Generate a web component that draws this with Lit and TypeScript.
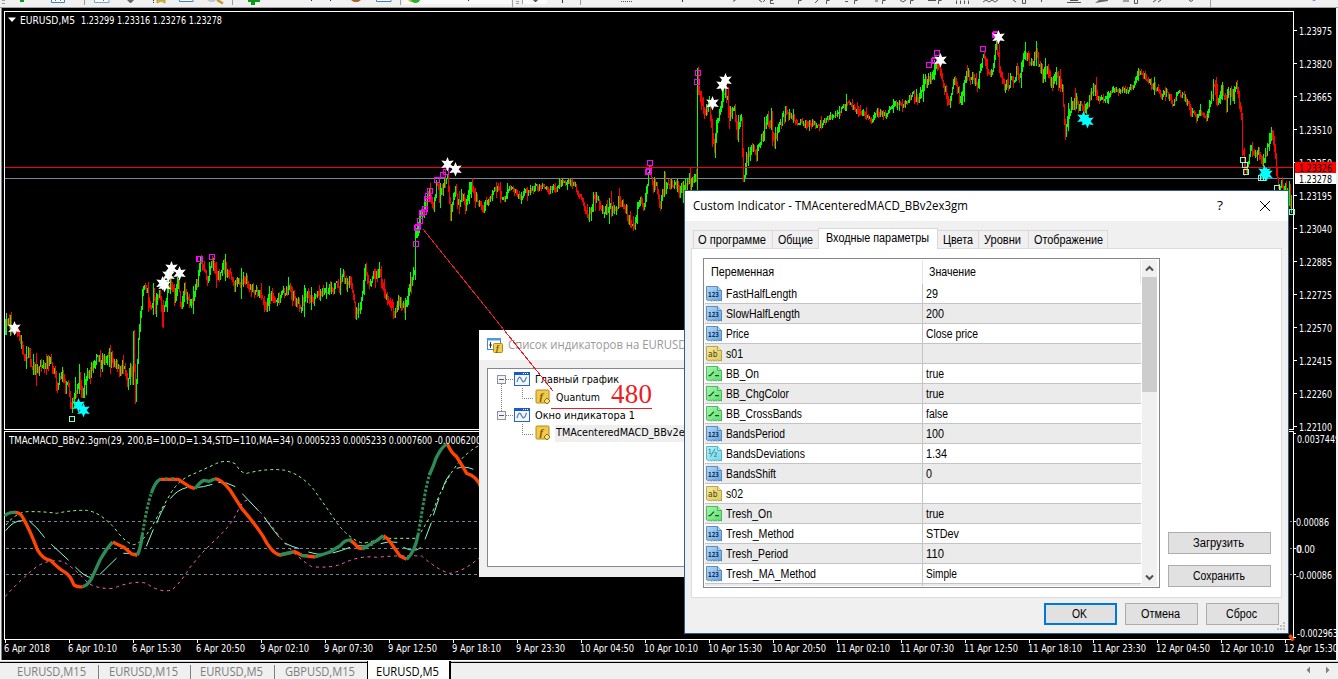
import {LitElement, html, svg, css} from 'lit';
import {customElement, property} from 'lit/decorators.js';

// size, width: the width every caption takes in pixels
const label = (text: string, width: number, size = 12) => html`
    <svg class="label" width=${width + 2} height="15">
        <text x="0" y="11" font-size=${size} textLength=${width} lengthAdjust="spacingAndGlyphs">${text}</text>
    </svg>`;

const chartText = (x: number, y: number, text: string, width: number) => svg`
    <text x=${x} y=${y} textLength=${width} lengthAdjust="spacingAndGlyphs">${text}</text>`;

const PRICES: [number, number][] = [
    [5, 329], [9, 323], [14, 328], [20, 335], [25, 359], [29, 352], [32, 364], [38, 373], [41, 363], [45, 368],
    [50, 362], [55, 368], [57, 388], [63, 370], [66, 386], [69, 386], [72, 411], [75, 397], [80, 379], [83, 397],
    [87, 375], [92, 370], [98, 354], [102, 365], [108, 354], [111, 357], [116, 365], [120, 371], [125, 365],
    [128, 385], [131, 365], [133, 384], [134, 335], [136, 400], [139, 340], [142, 307], [144, 285], [147, 290],
    [152, 310], [154, 292], [156, 308], [160, 292], [163, 320], [168, 290], [172, 284], [175, 297], [179, 286],
    [182, 307], [185, 290], [189, 302], [193, 300], [198, 280], [201, 263], [205, 271], [209, 282], [212, 260],
    [216, 271], [219, 275], [224, 267], [230, 275], [236, 284], [240, 283], [245, 276], [250, 289], [258, 292],
    [266, 308], [272, 297], [276, 303], [283, 292], [290, 290], [295, 298], [301, 308], [306, 294], [312, 301],
    [320, 294], [330, 289], [340, 285], [343, 272], [347, 285], [350, 280], [354, 295], [356, 314], [362, 303],
    [366, 270], [370, 285], [374, 275], [380, 273], [384, 290], [390, 300], [395, 313], [400, 300], [406, 307],
    [410, 285], [415, 268], [416, 236], [418, 226], [422, 216], [427, 203], [430, 191], [434, 207], [438, 182],
    [440, 201], [444, 182], [448, 176], [451, 217], [456, 185], [458, 208], [462, 195], [466, 206], [471, 183],
    [475, 192], [478, 200], [483, 206], [490, 201], [495, 190], [498, 187], [504, 200], [510, 187], [515, 191],
    [520, 199], [525, 193], [530, 190], [540, 187], [549, 190], [557, 188], [562, 181], [570, 183], [576, 187],
    [582, 200], [589, 218], [595, 195], [603, 211], [610, 206], [615, 211], [620, 201], [627, 212], [633, 228],
    [636, 225], [640, 200], [644, 205], [647, 193], [650, 167], [654, 188], [656, 183], [661, 206], [665, 187],
    [673, 181], [680, 190], [687, 184], [693, 180], [697, 177], [698, 82], [702, 100], [706, 113], [710, 103],
    [712, 128], [715, 145], [718, 124], [722, 104], [726, 90], [730, 115], [735, 110], [738, 137], [742, 114],
    [744, 182], [747, 160], [752, 148], [757, 155], [762, 140], [765, 128], [768, 118], [772, 125], [775, 141],
    [780, 128], [787, 111], [797, 122], [812, 124], [820, 126], [830, 117], [840, 112], [847, 104], [857, 109],
    [867, 115], [872, 121], [878, 113], [887, 114], [893, 105], [907, 104], [913, 93], [919, 101], [927, 80],
    [932, 80], [937, 65], [942, 73], [945, 92], [950, 101], [955, 79], [961, 102], [965, 82], [968, 73],
    [973, 79], [978, 88], [983, 57], [987, 65], [991, 79], [997, 45], [1000, 65], [1005, 85], [1008, 88],
    [1012, 76], [1015, 84], [1017, 67], [1021, 79], [1025, 50], [1028, 57], [1033, 63], [1037, 54], [1043, 76],
    [1048, 68], [1052, 84], [1058, 77], [1063, 90], [1064, 108], [1066, 134], [1070, 110], [1077, 101],
    [1083, 108], [1088, 105], [1093, 91], [1100, 98], [1107, 99], [1113, 90], [1127, 90], [1134, 86],
    [1139, 72], [1145, 76], [1150, 82], [1157, 88], [1162, 96], [1167, 92], [1173, 103], [1180, 92],
    [1185, 96], [1190, 109], [1197, 117], [1202, 112], [1207, 118], [1210, 105], [1215, 84], [1219, 104],
    [1223, 89], [1227, 106], [1229, 89], [1233, 97], [1237, 89], [1239, 98], [1242, 115], [1243, 150],
    [1246, 168], [1248, 165], [1252, 147], [1257, 159], [1259, 150], [1263, 165], [1266, 155], [1269, 145],
    [1272, 131], [1275, 145], [1277, 170], [1279, 187], [1283, 186], [1288, 190],
];

const noise = (n: number) => {
    const v = Math.sin(n * 127.1 + 3.7) * 43758.5453;
    return v - Math.floor(v);
};

function buildBars() {
    let up = '';
    let down = '';
    let prev = PRICES[0][1];
    for (let i = 0; i < PRICES.length - 1; i++) {
        const [x0, y0] = PRICES[i];
        const [x1, y1] = PRICES[i + 1];
        // quiet stretches of the session have short bars
        const amp = (x0 > 780 && x0 < 910) || (x0 > 1095 && x0 < 1205) || (x0 > 485 && x0 < 585) ? 5 : 8;
        for (let x = x0; x < x1; x++) {
            const close = y0 + ((y1 - y0) * (x - x0 + 1)) / (x1 - x0) + (noise(x) - 0.5) * amp;
            const spike = noise(x + 0.8) > 0.85 ? amp * 1.3 : 0;
            const top = Math.round(Math.min(prev, close) - noise(x + 0.3) * amp * 0.7 - spike * noise(x + 0.1));
            const bottom = Math.round(Math.max(prev, close) + noise(x + 0.6) * amp * 0.7 + spike * noise(x + 0.2));
            const bar = `M${x + 0.5} ${top}V${Math.max(bottom, top + 2)}`;
            if (close <= prev) up += bar;
            else down += bar;
            prev = close;
        }
    }
    return {up, down};
}

const BARS = buildBars();

const STARS = [[14, 328], [171, 268], [168, 275], [162, 283], [164, 285], [179, 273], [447, 164], [455, 169],
    [712, 103], [722, 85], [725, 80], [940, 60], [998, 37]];
const BUY_STARS = [[78, 405], [83, 410], [1083, 118], [1087, 121], [1264, 172], [1266, 174]];
const SELL_BOXES = [[199, 259], [200, 259], [212, 257], [416, 244], [417, 228], [418, 227], [420, 221], [422, 213],
    [425, 209], [424, 212], [427, 199], [428, 196], [430, 191], [437, 180], [443, 175], [446, 172], [650, 163],
    [648, 172], [649, 171], [698, 73], [697, 82], [929, 65], [935, 60], [937, 53], [934, 61], [983, 49],
    [995, 35], [996, 34]];
const BUY_BOXES = [[72, 419], [1243, 160], [1245, 165], [1246, 172], [1261, 178], [1263, 178], [1277, 188],
    [1292, 212]];

const star = ([x, y]: number[], color: string) => svg`
    <path transform="translate(${x} ${y})" fill=${color}
        d="M0.5-7L2.1-3L6.8-3.5L3.6 0.3L6.8 4L2.1 3.4L0.5 7.5L-1.1 3.4L-5.8 4L-2.6 0.3L-5.8-3.5L-1.1-3Z"/>`;

const box = ([x, y]: number[], color: string) => svg`
    <rect x=${x - 2.5} y=${y - 2.5} width="5" height="5" fill="none" stroke=${color}/>`;

const TIMES = ['6 Apr 2018', '6 Apr 10:10', '6 Apr 15:30', '6 Apr 20:50', '9 Apr 02:10', '9 Apr 07:30',
    '9 Apr 12:50', '9 Apr 18:10', '9 Apr 23:30', '10 Apr 04:50', '10 Apr 10:10', '10 Apr 15:30', '10 Apr 20:50',
    '11 Apr 02:10', '11 Apr 07:30', '11 Apr 12:50', '11 Apr 18:10', '11 Apr 23:30', '12 Apr 04:50',
    '12 Apr 10:10', '12 Apr 15:30'];

const SCALE = ['1.23975', '1.23820', '1.23665', '1.23510', '1.23350', '1.23195', '1.23040', '1.22885',
    '1.22725', '1.22570', '1.22415', '1.22260', '1.22100'];

@customElement('price-chart')
export class PriceChart extends LitElement {
    static styles = css`
        :host { display: block; height: 652px; }
        svg { display: block; font-family: "DejaVu Sans Condensed", "DejaVu Sans", sans-serif; font-size: 10.5px; }
        .crisp { shape-rendering: crispEdges; }
    `;

    // three times finer units than the page, origin at the pane's top
    oscillator() {
        return svg`
        <g transform="translate(0 430) scale(.33333)" fill="none" stroke-linejoin="round">
            <g class="crisp" stroke="#778899" stroke-width="3" stroke-dasharray="9 9">
                <path d="M18 274.5H3876M18 355.5H3876M18 433.5H3876"/>
            </g>
            <g stroke-width="3">
                <path stroke="#98fb98" stroke-dasharray="9 9" d="M18 285Q45 250 80 245Q130 244 170 250Q215 240 260 241Q300 246 345 296Q375 338 400 344Q425 342 455 290L515 185Q535 155 562 140L640 105Q675 85 707 102Q725 135 745 129Q800 115 850 120Q900 130 940 177Q985 240 1010 278Q1050 330 1090 340Q1130 330 1165 325L1250 325Q1275 290 1300 240Q1330 160 1370 105Q1400 65 1440 45"/>
                <path stroke="#ff69b4" stroke-dasharray="9 11" d="M15 500Q60 450 110 410Q150 385 190 395Q230 420 262 457Q290 478 340 475Q400 450 440 460Q480 490 515 480Q540 460 568 415L605 370L645 330Q690 290 710 250Q730 205 745 212Q790 250 850 335Q900 390 935 410Q990 415 1025 402Q1080 375 1130 382Q1200 375 1265 378Q1320 425 1350 430Q1390 425 1440 382"/>
                <path stroke="#7fffd4" d="M17 302Q40 270 70 272M88 273Q110 290 134 323M154 343L206 391M226 411Q255 442 276 443M299 434L350 384M370 370H415M439 349L460 298M470 280Q485 240 496 226M511 206Q530 180 562 172M583 173Q610 172 637 163M655 157Q680 155 706 170M727 191L776 243M793 262Q815 295 838 322M854 339Q875 350 898 356M925 366Q950 375 980 373M998 369Q1025 362 1050 352M1070 347Q1095 350 1118 345M1142 341Q1165 332 1192 337M1210 352Q1245 370 1262 352M1275 328L1294 278M1300 256L1317 205M1327 180Q1335 150 1350 133M1370 115Q1395 107 1420 118"/>
            </g>
            <g stroke-width="10" stroke="#ff4500">
                <path d="M42 247Q60 246 68 262Q90 300 112 359Q130 390 152 391Q175 415 195 427Q210 435 222 465Q235 473 248 470"/>
                <path d="M338 336Q355 345 372 352L395 372L412 376M480 148H535L550 158L568 170L585 176"/>
                <path d="M645 146Q665 148 690 180L725 235Q760 275 790 320Q815 370 840 375L885 365L905 376L945 381"/>
                <path d="M1050 330Q1065 340 1075 354L1088 357M1150 317L1165 328L1200 378L1220 388"/>
                <path d="M1342 42Q1355 70 1368 78Q1380 95 1400 130Q1430 138 1442 170M3869 615L3880 632"/>
            </g>
            <g stroke-width="10" stroke="#2e8b57">
                <path d="M15 258Q22 246 46 247M248 470Q262 467 275 445L300 390Q320 355 338 336M412 376Q422 355 427 315"/>
                <path d="M454 190Q465 155 482 147M585 176Q600 155 612 151L628 154L645 146M840 375L880 366"/>
                <path d="M945 381L990 366L1022 346Q1035 328 1055 330M1088 357L1105 346L1130 332L1150 317"/>
                <path d="M1220 388Q1245 365 1254 315M1288 135Q1300 110 1308 85Q1325 50 1340 43"/>
                <path d="M496 147h6M515 146h6M903 377h20"/>
                <path stroke-width="9" stroke-dasharray="8 5" d="M427 315Q440 230 454 190M1254 315Q1262 270 1272 210Q1280 160 1290 130"/>
            </g>
        </g>`;
    }

    render() {
        return html`
        <svg width="1338" height="652" viewBox="0 8 1338 652">
            <rect y="8" width="1338" height="652" fill="#f0f0f0"/>
            <rect x="1" y="8" width="1" height="652" fill="#808080"/>
            <rect x="2" y="8" width="1334" height="652" fill="#000"/>
            <g class="crisp" fill="none" stroke="#fff">
                <path d="M1293.5 430V11.5H4.5V429.5H1293.5M1293.5 640V431.5H4.5V639.5H1293.5"/>
                ${SCALE.map((_, i) => svg`<path d="M1294 ${30.5 + i * 33}h3"/>`)}
                ${TIMES.map((_, i) => svg`<path d="M${5.5 + i * 64} 639v4"/>`)}
                <path d="M1294 433.5h2M1294 521.5h2M1294 548.5h2M1294 574.5h2M1294 637.5h2"/>
            </g>
            <path class="crisp" stroke="#778899" d="M5 178.5H1293"/>
            <g class="crisp" fill="none">
                <path stroke="#0f0" d=${BARS.up + 'M1289.5 181V206M1291.5 195V213'}/>
                <path stroke="#f00" d=${BARS.down + 'M163.5 300V328M1290.5 184V208'}/>
                <path stroke="#f00" d="M5 167.5H1293"/>
                ${SELL_BOXES.map((p) => box(p, '#f0f'))}
                ${BUY_BOXES.map((p) => box(p, '#7fffd4'))}
            </g>
            ${STARS.map((p) => star(p, '#fff'))}
            ${BUY_STARS.map((p) => star(p, '#0ff'))}
            ${this.oscillator()}
            <path fill="#fff" d="M8 17.5H16L12 22Z"/>
            <g fill="#fff">
                ${chartText(20, 23.5, 'EURUSD,M5', 55)}
                ${chartText(81, 23.5, '1.23299 1.23316 1.23276 1.23278', 141)}
                ${chartText(9, 444, 'TMAcMACD_BBv2.3gm(29, 200,B=100,D=1.34,STD=110,MA=34)', 285)}
                ${chartText(297, 444, '0.0005233 0.0005233 0.0007600 -0.0006200', 184)}
                ${SCALE.map((t, i) => chartText(1299, 34.5 + i * 33, t, 33))}
                ${chartText(1297, 442.5, '0.0037449', 43)}
                ${chartText(1296, 525.5, '0.00086', 33)}
                ${chartText(1296, 552.5, '0.00', 19)}
                ${chartText(1297, 552.5, '0', 5)}
                ${chartText(1296, 578.5, '-0.00086', 36)}
                ${chartText(1297, 636.5, '-0.0029638', 46)}
                ${TIMES.map((t, i) => chartText(4 + i * 64, 652, t, i === 0 ? 46 : i < 9 ? 49 : 54))}
            </g>
            <rect x="1295" y="162" width="41" height="11" fill="#f00"/>
            <rect x="1295" y="173" width="41" height="11" fill="#fff"/>
            ${chartText(1299, 171.5, '1.23326', 33)}
            ${chartText(1299, 182.5, '1.23278', 33)}
            <rect x="1336" y="8" width="2" height="652" fill="#f0f0f0"/>
        </svg>`;
    }
}

@customElement('param-icon')
export class ParamIcon extends LitElement {
    @property()
    kind = 'int';

    static styles = css`
        :host { display: block; width: 16px; height: 16px; }
        svg { display: block; }
        text { font: bold 7px "DejaVu Sans", sans-serif; }
        .str { font-size: 9px; font-weight: normal; }
        .dbl { font-size: 10px; font-weight: normal; }
    `;

    render() {
        const colors: Record<string, string[]> = {
            int: ['#b3d7f8', '#6ca5dd', '#3f78b0', '#0d2f57'],
            str: ['#f3e9a0', '#e0c95c', '#a89335', '#4b3f08'],
            bool: ['#a4f5ac', '#5fe070', '#35a84a', '#0b5a1b'],
            dbl: ['#b8f1f8', '#74d6e6', '#3fa3b5', '#14798c'],
        };
        const [light, dark, line, ink] = colors[this.kind];
        return html`
        <svg width="16" height="16" viewBox="0 0 16 16">
            <defs>
                <linearGradient id="g" x2="1" y2="1">
                    <stop offset="0" stop-color=${light}/><stop offset="1" stop-color=${dark}/>
                </linearGradient>
            </defs>
            <path fill="url(#g)" stroke=${line} stroke-width=".8"
                d="M.5.5H11.5L15.5 4.5V15L14 14L13 15.2L11.5 13.8L10.5 15.2L9 13.8L8 15.2L6.5 13.8L5.5 15.2L4 13.8L2.8 14.8L.5 13.6Z"/>
            <path fill=${light} stroke=${line} stroke-width=".8" d="M11.5.5V4.5H15.5"/>
            ${this.kind === 'int' ? svg`<text x="2" y="11" fill=${ink} textLength="11" lengthAdjust="spacingAndGlyphs">123</text>` : ''}
            ${this.kind === 'str' ? svg`<text class="str" x="2" y="11" fill=${ink} textLength="9.5" lengthAdjust="spacingAndGlyphs">ab</text>` : ''}
            ${this.kind === 'dbl' ? svg`<text class="dbl" x="1.8" y="10.5" fill=${ink}>½</text>` : ''}
            ${this.kind === 'bool' ? svg`<path fill="none" stroke=${ink} stroke-width="1.2" d="M2.5 9.6H4.2L8 5.6M9 9.6H13"/>` : ''}
        </svg>`;
    }
}

// kind, name, name width, value, value width
const PARAMS: [string, string, number, string, number][] = [
    ['int', 'FastHalfLength', 71, '29', 12],
    ['int', 'SlowHalfLength', 74, '200', 18],
    ['int', 'Price', 23, 'Close price', 52],
    ['str', 's01', 17, '', 0],
    ['bool', 'BB_On', 33, 'true', 18],
    ['bool', 'BB_ChgColor', 63, 'true', 18],
    ['bool', 'BB_CrossBands', 76, 'false', 22],
    ['int', 'BandsPeriod', 59, '100', 18],
    ['dbl', 'BandsDeviations', 79, '1.34', 21],
    ['int', 'BandsShift', 50, '0', 6],
    ['str', 's02', 17, '', 0],
    ['bool', 'Tresh_On', 46, 'true', 18],
    ['int', 'Tresh_Method', 68, 'STDev', 33],
    ['int', 'Tresh_Period', 62, '110', 18],
    ['int', 'Tresh_MA_Method', 90, 'Simple', 31],
];

@customElement('indicator-dialog')
export class IndicatorDialog extends LitElement {
    static styles = css`
        :host {
            display: flex; flex-direction: column; box-sizing: border-box; width: 605px; height: 444px;
            background: #f0f0f0; border: 1px solid #2f5f88; font-family: "Liberation Sans", Arial, sans-serif;
        }
        .label { display: block; fill: #000; flex: none; overflow: visible; }
        .title { display: flex; align-items: center; height: 30px; padding: 0 17px 0 8px; background: #fff; font-family: "Open Sans", sans-serif; }
        .help { margin-left: auto; margin-right: 34px; }
        .tabs { display: flex; align-items: flex-end; height: 21px; padding: 6px 0 0 8px; }
        .tab { display: flex; box-sizing: border-box; align-items: center; height: 18px; border: 1px solid #d9d9d9; border-bottom: 0; border-left-width: 0; padding: 1px 0 0 5px; }
        .tab:first-child { border-left-width: 1px; padding-left: 4px; }
        .tab.active { height: 21px; background: #fff; padding: 0 0 2px 7px; margin-bottom: -1px; z-index: 1; border-left-width: 1px; margin-left: -1px; }
        .page { display: flex; box-sizing: border-box; width: 591px; height: 350px; margin-left: 6px; padding: 9px 10px 0 11px; background: #fff; border: 1px solid #dcdcdc; }
        .table { display: flex; box-sizing: border-box; width: 457px; height: 330px; border: 1px solid #828790; padding: 1px 2px 1px 1px; }
        .grid { width: 436px; overflow: hidden; }
        .head, .row { display: grid; grid-template-columns: 218px 218px; }
        .head { height: 24px; }
        .head div { border-right: 1px solid #e5e5e5; padding: 5px 0 0 6px; }
        .row { height: 20px; background: #fff; }
        .row:nth-child(odd) { background: #ebebeb; }
        .row div { display: flex; align-items: center; box-sizing: border-box; height: 20px; border-bottom: 1px solid #c4c4c4; }
        .row .name { gap: 4px; padding-left: 1px; border-right: 1px solid #c4c4c4; }
        .row .value { padding-left: 3px; }
        .row .label { margin-top: 1px; }
        .scroll { display: flex; flex-direction: column; width: 15px; margin-left: 1px; background: #f0f0f0; }
        .scroll svg { display: block; height: 17px; }
        .thumb { height: 115px; margin-bottom: auto; background: #cdcdcd; }
        .side { display: flex; flex-direction: column; justify-content: flex-end; gap: 11px; padding: 0 0 10px 8px; }
        .button { display: flex; align-items: center; justify-content: center; box-sizing: border-box; width: 73px; height: 22px; background: #e1e1e1; border: 1px solid #adadad; }
        .side .button { width: 103px; }
        .button.default { border: 2px solid #0078d7; }
        .footer { display: flex; justify-content: flex-end; gap: 8px; padding: 5px 9px 0 0; }
        .grip { position: absolute; right: 3px; bottom: 3px; }
    `;

    render() {
        const tab = (text: string, width: number, box: number, active = false) => html`
            <div class="tab ${active ? 'active' : ''}" style="width:${box}px">${label(text, width)}</div>`;
        return html`
        <div class="title">
            ${label('Custom Indicator - TMAcenteredMACD_BBv2ex3gm', 275, 12)}
            <span class="help">${label('?', 6, 13)}</span>
            <svg width="12" height="12"><path d="M1 1L11 11M11 1L1 11" stroke="#000"/></svg>
        </div>
        <div class="tabs">
            ${tab('О программе', 68, 80)}
            ${tab('Общие', 35, 46)}
            ${tab('Входные параметры', 103, 120, true)}
            ${tab('Цвета', 30, 41)}
            ${tab('Уровни', 37, 50)}
            ${tab('Отображение', 69, 79)}
        </div>
        <div class="page">
            <div class="table">
                <div class="grid">
                    <div class="head">
                        <div>${label('Переменная', 63)}</div>
                        <div>${label('Значение', 47)}</div>
                    </div>
                    ${PARAMS.map(([kind, name, w, value, vw]) => html`
                    <div class="row">
                        <div class="name"><param-icon kind=${kind}></param-icon>${label(name, w)}</div>
                        <div class="value">${value ? label(value, vw) : ''}</div>
                    </div>`)}
                    <div class="row"><div class="name"></div><div class="value"></div></div>
                </div>
                <div class="scroll">
                    <svg width="15" height="17"><path d="M4 10.5L7.5 7L11 10.5" fill="none" stroke="#505050" stroke-width="2"/></svg>
                    <div class="thumb"></div>
                    <svg width="15" height="17"><path d="M4 6.5L7.5 10L11 6.5" fill="none" stroke="#505050" stroke-width="2"/></svg>
                </div>
            </div>
            <div class="side">
                <div class="button">${label('Загрузить', 51)}</div>
                <div class="button">${label('Сохранить', 52)}</div>
            </div>
        </div>
        <div class="footer">
            <div class="button default">${label('OK', 15)}</div>
            <div class="button">${label('Отмена', 39)}</div>
            <div class="button">${label('Сброс', 31)}</div>
        </div>
        <svg class="grip" width="8" height="8" fill="#bfbfbf"><path d="M6 0h2v2h-2zM3 3h2v2h-2zM6 3h2v2h-2zM0 6h2v2h-2zM3 6h2v2h-2zM6 6h2v2h-2z"/></svg>`;
    }
}

const windowIcon = svg`
    <svg width="16" height="14" viewBox="0 0 16 14">
        <rect x=".5" y=".5" width="15" height="13" fill="#f4f8ff" stroke="#2a62c8"/>
        <rect width="16" height="3" fill="#1b57d0"/>
        <path d="M9 1.5h1M11 1.5h1M13 1.5h1" stroke="#fff"/>
        <path d="M3 10Q5 2 7.5 7.5Q10 13 12.5 5" fill="none" stroke="#5b86bd" stroke-width="1.3"/>
    </svg>`;

const functionIcon = svg`
    <svg width="16" height="16" viewBox="0 0 16 16">
        <rect x="1" y="1" width="13" height="13" rx="1" fill="#f0ca4c" stroke="#b48a17"/>
        <text x="4.5" y="11" font-family="Liberation Serif, serif" font-style="italic" font-weight="bold" font-size="11" fill="#7b5804">f</text>
        <path d="M12 9L15 12L12 15L9 12Z" fill="#fbe07a" stroke="#94700c"/>
    </svg>`;

@customElement('indicator-list')
export class IndicatorList extends LitElement {
    static styles = css`
        :host {
            display: flex; flex-direction: column; box-sizing: border-box; width: 220px; height: 247px;
            background: #f0f0f0; font-family: "DejaVu Sans Condensed", "DejaVu Sans", sans-serif;
        }
        svg { flex: none; }
        .label { display: block; fill: #000; overflow: visible; }
        .title { display: flex; align-items: center; height: 30px; padding-left: 8px; background: #fff; gap: 4px; font-family: "Open Sans", sans-serif; }
        .title .label { fill: #999; }
        .tree { box-sizing: border-box; height: 199px; margin: 8px 0 0 8px; border: 1px solid #828790; background: #fff; padding: 1px 0 0 9px; }
        .node, .leaf { display: flex; align-items: center; height: 18px; }
        .node .label { margin-left: 5px; }
        .leaf .label { padding-left: 1px; margin-left: 4px; }
        .leaf.selected .label { background: #efefef; height: 17px; width: 140px; }
    `;

    node(text: string, width: number, more: boolean) {
        return html`
        <div class="node">
            <svg width="17" height="18">
                <path d="M9 9.5H17" stroke="#808080" stroke-dasharray="1 1"/>
                ${more ? svg`<path d="M4.5 14V18" stroke="#808080" stroke-dasharray="1 1"/>` : svg`<path d="M4.5 0V5" stroke="#808080" stroke-dasharray="1 1"/>`}
                <rect x=".5" y="5.5" width="8" height="8" fill="#f4f4f4" stroke="#919191"/>
                <path d="M2 9.5H7" stroke="#3b5aa5"/>
            </svg>
            ${windowIcon}
            ${label(text, width, 11)}
        </div>`;
    }

    leaf(text: string, width: number, more: boolean) {
        return html`
        <div class="leaf ${more ? '' : 'selected'}">
            <svg width="38" height="18">
                ${more ? svg`<path d="M4.5 0V18" stroke="#808080" stroke-dasharray="1 1"/>` : ''}
                <path d="M25.5 0V10.5H37" fill="none" stroke="#808080" stroke-dasharray="1 1"/>
            </svg>
            ${functionIcon}
            ${label(text, width, 11)}
        </div>`;
    }

    render() {
        return html`
        <div class="title">
            <svg width="17" height="16">
                <rect x=".5" y="1.5" width="13" height="11" fill="#fff" stroke="#3c8cc0"/>
                <rect y="1" width="14" height="2.5" fill="#4a9be0"/>
                <path d="M3.5 5V11M2 8H5" stroke="#335"/>
                <rect x="6.5" y="6.5" width="9" height="9" rx="1" fill="#f3cf4e" stroke="#b48a17"/>
                <text x="9" y="14" font-family="Liberation Serif, serif" font-style="italic" font-weight="bold" font-size="8" fill="#6b4c04">f</text>
            </svg>
            ${label('Список индикаторов на EURUSD,M5', 198)}
        </div>
        <div class="tree">
            ${this.node('Главный график', 84, true)}
            ${this.leaf('Quantum', 44, true)}
            ${this.node('Окно индикатора 1', 100, false)}
            ${this.leaf('TMAcenteredMACD_BBv2ex3gm', 156, false)}
        </div>`;
    }
}

@customElement('app-root')
export default class AppRoot extends LitElement {
    static styles = css`
        :host { display: block; position: relative; width: 1338px; height: 679px; overflow: hidden; background: #f0f0f0; }
        .toolbar { display: block; height: 8px; }
        .list { position: absolute; left: 479px; top: 330px; }
        .notes { position: absolute; left: 400px; top: 210px; }
        .dialog { position: absolute; left: 684px; top: 190px; }
        .tabs { display: flex; box-sizing: border-box; height: 19px; padding-left: 5px; border-top: 1px solid #fff; background: linear-gradient(#d0d0d0 0 1px, #000 1px 2px, #f0f0f0 2px); font-family: "Open Sans", sans-serif; }
        .tab { display: flex; box-sizing: border-box; padding: 4px 0 0 12px; }
        .label { overflow: visible; }
        .tab .label { fill: #7d7d7d; }
        .rule { width: 1px; margin-top: 4px; background: #808080; }
        .tab.second { padding-left: 10px; }
        .tab.third { padding-left: 9px; }
        .tab.active { width: 84px; padding-left: 8px; background: #fff; border: solid #000; border-width: 0 2px 0 1px; }
        .tab.active .label { fill: #000; }
        .arrows { margin: 3px 8px 0 auto; }
    `;

    toolbar() {
        return html`
        <svg class="toolbar" width="1338" height="8">
            <rect width="1338" height="8" fill="#f0f0f0"/>
            <path d="M403 0H511V4H403ZM523 0H547V4H523Z" fill="#fafafa"/>
            <path d="M2 .5h3M2 3.5h3M516 1.5h3M516 3.5h3" stroke="#a0a0a0"/>
            <path d="M84.5 0V5M232.5 0V5M400.5 0V5M512.5 0V7M522.5 0V4M580.5 0V5M1210.5 0V7" stroke="#a0a0a0"/>
            <path d="M20 0h4v2h-4zM248 0h12v2h-5v3h-4v-3h-3z" fill="#0a9a18"/>
            <path d="M51.5 0V2.5H64.5V0M179.5 0V1.5H193V0M376.5 0V1.5H391V0" fill="#fff" stroke="#3d84c6"/>
            <path d="M94.5 0V2.5H109V0" fill="#fff" stroke="#6da8dc"/>
            <path d="M55.5 0V1M60.5 0V1" stroke="#3d84c6"/>
            <path d="M103.5 0V1" stroke="#d44"/>
            <path d="M127 0h7l-3 3h-1z" fill="#666"/>
            <path d="M157 0h8v3l-4-2l-4 2z" fill="#e9c545" stroke="#a8841a" stroke-width=".7"/>
            <path d="M153.5 0V3" stroke="#333" stroke-dasharray="1 1"/>
            <path d="M207 0h9l-2 2h-4z" fill="#b8cbd8"/>
            <path d="M217 0L223 3.5" stroke="#c79a2b" stroke-width="2.5"/>
            <path d="M311.5 0V1M330.5 0V1M468.5 0V1" stroke="#1a2a80"/>
            <path d="M351 0h10l-3 2h-4z" fill="#a8651c"/>
            <path d="M408 0h8l-2 2h-4z" fill="#d8b93a"/>
            <path d="M411 0h9q-1 3-4.500 3t-4.500-3z" fill="#21b52c"/>
            <path d="M533 0h5l-2 2h-1z" fill="#555"/>
            <path d="M562.5 0V3M682.5 0V2" stroke="#333"/>
            <path d="M621 1.500H633" stroke="#555" stroke-dasharray="1 1"/>
            <g fill="none" stroke="#555">
                <path d="M733 1.500l3-2M759 0l3 2M765 0l-2 2M770.500 0V3.500H774M770 .5h3"/>
                <path d="M798.500 4V.5h3M826.500 4V.5h3M854.500 4V.5h3M882.500 4V.5h3M910.500 4V.5h3M938.500 4V.5h3"/>
                <path d="M815 3l3-3M845 1.500h3M875 1h3M900 0l3 2l3-2M928 .5h8M956.500 4V.5M960.500 4V.5M964.500 4V.5M968.500 4V.5"/>
                <path d="M983 2l3-2l3 2l3-2l3 2l3-2M1013 0l3 2M1022.500 0V3.500H1025.500V0M1041.500 0V2"/>
                <path d="M1067 2.500H1081M1070 .5H1078M1123 1h6M1134.500 0V3.500H1137.500V0M1153 2l3-2M1158 2l3-2M1189 0l2 1.500l2-1.500"/>
            </g>
            <path d="M1095 3l13-2v-1h-9z" fill="#666"/>
            <path d="M1312 0h4l-2 1z" fill="#3c78d8"/>
            <rect y="7" width="1338" height="1" fill="#a0a0a0"/>
        </svg>`;
    }

    render() {
        return html`
        ${this.toolbar()}
        <price-chart></price-chart>
        <div class="tabs">
            <div class="tab" style="width:93px">${label('EURUSD,M15', 69)}</div>
            <div class="rule"></div>
            <div class="tab second" style="width:91px">${label('EURUSD,M15', 69)}</div>
            <div class="rule"></div>
            <div class="tab third" style="width:83px">${label('EURUSD,M5', 63)}</div>
            <div class="rule"></div>
            <div class="tab second" style="width:92px">${label('GBPUSD,M15', 70)}</div>
            <div class="tab active">${label('EURUSD,M5', 63)}</div>
            <svg class="arrows" width="24" height="12" fill="#808080"><path d="M4 2.500V9.500L0.500 6ZM20 2.500V9.500L23.500 6Z"/></svg>
        </div>
        <indicator-list class="list"></indicator-list>
        <svg class="notes" width="270" height="210">
            <path d="M23 19L153 181" stroke="#ed1c24" shape-rendering="crispEdges"/>
            <path d="M151 198.500H252" stroke="#ed1c24"/>
            <text x="211" y="193" font-family="Liberation Serif, serif" font-size="27" textLength="41" fill="#ed1c24">480</text>
        </svg>
        <indicator-dialog class="dialog"></indicator-dialog>`;
    }
}
